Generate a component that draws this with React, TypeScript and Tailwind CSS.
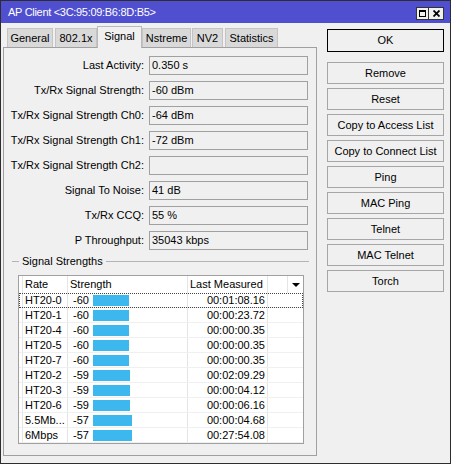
import React from "react";

const fields = [
  { label: "Last Activity:", value: "0.350 s" },
  { label: "Tx/Rx Signal Strength:", value: "-60 dBm" },
  { label: "Tx/Rx Signal Strength Ch0:", value: "-64 dBm" },
  { label: "Tx/Rx Signal Strength Ch1:", value: "-72 dBm" },
  { label: "Tx/Rx Signal Strength Ch2:", value: "" },
  { label: "Signal To Noise:", value: "41 dB" },
  { label: "Tx/Rx CCQ:", value: "55 %" },
  { label: "P Throughput:", value: "35043 kbps" },
];

const tabs = [
  { label: "General", w: "w-[46px]", ml: "ml-0" },
  { label: "802.1x", w: "w-[42px]", ml: "ml-[2px]" },
  { label: "Signal", w: "w-[45px]", ml: "ml-0", active: true },
  { label: "Nstreme", w: "w-[49px]", ml: "ml-0" },
  { label: "NV2", w: "w-[31px]", ml: "ml-px" },
  { label: "Statistics", w: "w-[53px]", ml: "ml-[2px]" },
];

const strengths: [string, number, string][] = [
  ["HT20-0", -60, "00:01:08.16"],
  ["HT20-1", -60, "00:00:23.72"],
  ["HT20-4", -60, "00:00:00.35"],
  ["HT20-5", -60, "00:00:00.35"],
  ["HT20-7", -60, "00:00:00.35"],
  ["HT20-2", -59, "00:02:09.29"],
  ["HT20-3", -59, "00:00:04.12"],
  ["HT20-6", -59, "00:00:06.16"],
  ["5.5Mb...", -57, "00:00:04.68"],
  ["6Mbps", -57, "00:27:54.08"],
];

const actions = [
  "Remove",
  "Reset",
  "Copy to Access List",
  "Copy to Connect List",
  "Ping",
  "MAC Ping",
  "Telnet",
  "MAC Telnet",
  "Torch",
];

const cols = "grid grid-cols-[4px_45px_120px_80px_20px_15px]";

function TitleButtons() {
  return (
    <div className="flex self-start mt-[6px]">
      <div className="w-[13px] h-[13px] border border-[#333] bg-[#f0f0f0] flex items-center justify-center">
        <div className="w-[7px] h-[7px] border border-t-2 border-black" />
      </div>
      <div className="w-[15px] h-[13px] border border-l-0 border-[#333] bg-[#f0f0f0] flex items-center justify-center">
        <svg width="7" height="7" viewBox="0 0 7 7">
          <path d="M0.5 0.5 L6.5 6.5 M6.5 0.5 L0.5 6.5" stroke="#000" strokeWidth="1.8" />
        </svg>
      </div>
    </div>
  );
}

function StrengthTable() {
  return (
    <div className="ml-[14px] mt-[7px] w-[286px] border border-[#a0a0a0] bg-white">
      <div className={`${cols} h-[17px] items-stretch`}>
        <div className="border-r border-[#e5e5e5]" />
        <div className="border-r border-[#e5e5e5] pl-[2px] flex items-center">Rate</div>
        <div className="border-r border-[#e5e5e5] pl-[2px] flex items-center">Strength</div>
        <div className="border-r border-[#e5e5e5] pl-[2px] flex items-center">Last Measured</div>
        <div className="border-r border-[#e5e5e5]" />
        <div className="flex items-center justify-center">
          <svg width="8" height="4" viewBox="0 0 8 4">
            <path d="M0 0 H8 L4 4 Z" fill="#000" />
          </svg>
        </div>
      </div>
      {strengths.map(([rate, dbm, measured], i) => (
        <div
          key={rate}
          className={`${cols} h-[15px] border-b border-[#f0f0f0] ${
            i === 0 ? "outline-1 outline-dotted outline-[#444] outline-offset-[-1px]" : ""
          }`}
        >
          <div className="border-r border-[#e5e5e5]" />
          <div className="border-r border-[#e5e5e5] pl-[2px] flex items-center whitespace-nowrap">{rate}</div>
          <div className="border-r border-[#e5e5e5] pl-[5px] flex items-center">
            <span className="w-[20px]">{dbm}</span>
            <span className="h-[11px] bg-[#3db8ef]" style={{ width: 96 + dbm }} />
          </div>
          <div className="border-r border-[#e5e5e5] pr-[2px] flex items-center justify-end">{measured}</div>
          <div />
          <div />
        </div>
      ))}
    </div>
  );
}

export default function App() {
  return (
    <div className="w-[451px] h-[464px] flex flex-col bg-[#f0f0f0] border border-[#2d2d2d] text-[11px] leading-none text-black font-['Liberation_Sans',Arial,sans-serif] overflow-hidden">
      {/* title bar */}
      <div className="h-[22px] shrink-0 bg-[#4f4fd0] flex items-center justify-between pl-[7px] pr-[6px]">
        <span className="text-white tracking-[-0.3px] pt-px">AP Client &lt;3C:95:09:B6:8D:B5&gt;</span>
        <TitleButtons />
      </div>

      <div className="flex flex-1">
        {/* tabs + signal page */}
        <div className="ml-[2px] w-[314px] flex flex-col">
          <div className="h-[24px] pl-[4px] flex items-end">
            {tabs.map((t) =>
              t.active ? (
                <div
                  key={t.label}
                  className={`${t.w} ${t.ml} relative z-10 h-[22px] -mb-px bg-[#f0f0f0] border border-b-0 border-[#b9b9b9] flex items-center justify-center pb-[2px]`}
                >
                  {t.label}
                </div>
              ) : (
                <div
                  key={t.label}
                  className={`${t.w} ${t.ml} h-[19px] bg-[#d9d9d9] border border-b-0 border-[#c4c4c4] flex items-center justify-center`}
                >
                  {t.label}
                </div>
              )
            )}
          </div>

          <div className="h-[409px] border border-[#a0a0a0] pt-[8px] flex flex-col">
            <div className="flex flex-col gap-[6px]">
              {fields.map((f) => (
                <div key={f.label} className="flex items-center h-[19px]">
                  <span className="w-[140px] text-right whitespace-nowrap">{f.label}</span>
                  <div className="ml-[5px] w-[159px] h-[19px] border border-[#a0a0a0] pl-[2px] flex items-center">
                    {f.value}
                  </div>
                </div>
              ))}
            </div>

            {/* Signal Strengths group */}
            <div className="mt-[4px] h-[14px] flex items-center">
              <div className="ml-[8px] w-[7px] h-px bg-[#b4b4b4]" />
              <span className="px-[3px]">Signal Strengths</span>
              <div className="flex-1 mr-[7px] h-px bg-[#b4b4b4]" />
            </div>

            <StrengthTable />
          </div>
        </div>

        {/* buttons */}
        <div className="ml-[10px] w-[117px] pt-[6px] flex flex-col">
          <button className="h-[23px] border border-black bg-[#f0f0f0] text-[11px] leading-none">OK</button>
          <div className="mt-[10px] flex flex-col gap-[4px]">
            {actions.map((a) => (
              <button
                key={a}
                className="h-[22px] border border-[#a6a6a6] bg-[#f0f0f0] text-[11px] leading-none whitespace-nowrap"
              >
                {a}
              </button>
            ))}
          </div>
        </div>
      </div>
    </div>
  );
}
